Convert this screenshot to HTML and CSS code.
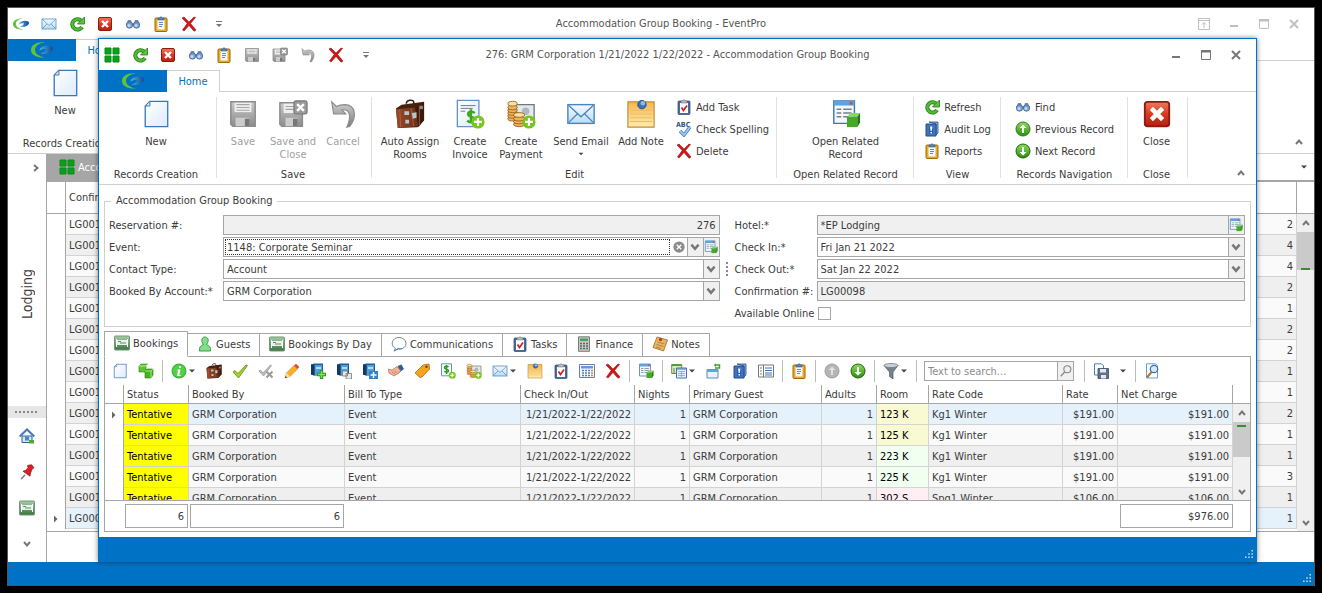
FILE: index.html
```html
<!DOCTYPE html>
<html lang="en">
<head>
    <meta charset="UTF-8">
    <meta name="viewport" content="width=device-width, initial-scale=1.0">
    <title>Accommodation Group Booking - EventPro</title>
    <link rel="stylesheet" href="styles.css">
</head>
<body>
    <svg class="defs" aria-hidden="true">
        <defs>
            <linearGradient id="gPage" x1="0" y1="0" x2="1" y2="1"><stop offset="0" stop-color="#fff"/><stop offset="1" stop-color="#dcebfb"/></linearGradient>
            <linearGradient id="gRed" x1="0" y1="0" x2="0" y2="1"><stop offset="0" stop-color="#ee7a60"/><stop offset=".5" stop-color="#d83a22"/><stop offset="1" stop-color="#b81e10"/></linearGradient>
            <linearGradient id="gGreen" x1="0" y1="0" x2="0" y2="1"><stop offset="0" stop-color="#8fdd5c"/><stop offset="1" stop-color="#2a8d12"/></linearGradient>
            <linearGradient id="gGray" x1="0" y1="0" x2="0" y2="1"><stop offset="0" stop-color="#c9c9c9"/><stop offset="1" stop-color="#8c8c8c"/></linearGradient>
            <linearGradient id="gMail" x1="0" y1="0" x2="0" y2="1"><stop offset="0" stop-color="#f4faff"/><stop offset="1" stop-color="#b8dcf8"/></linearGradient>
            <linearGradient id="gNote" x1="0" y1="0" x2="0" y2="1"><stop offset="0" stop-color="#f7b54e"/><stop offset="1" stop-color="#ffedb0"/></linearGradient>
            <linearGradient id="gBed" x1="0" y1="0" x2="0" y2="1"><stop offset="0" stop-color="#a9cbab"/><stop offset="1" stop-color="#3c7442"/></linearGradient>
            <linearGradient id="gBag" x1="0" y1="0" x2="1" y2="0"><stop offset="0" stop-color="#98492a"/><stop offset="1" stop-color="#6b3018"/></linearGradient>
            <linearGradient id="gUndo" x1="0" y1="0" x2="0" y2="1"><stop offset="0" stop-color="#cfcfcf"/><stop offset="1" stop-color="#7d7d7d"/></linearGradient>
            <linearGradient id="gLogo" x1="0" y1="0" x2="1" y2="0"><stop offset="0" stop-color="#49b6dc"/><stop offset="1" stop-color="#15479c"/></linearGradient>
        </defs>
        <symbol id="logo" viewBox="0 0 22 16">
            <path d="M14 .5C6-.5 0 3 0 8c0 5 6 8 14 7.500C8 14.500 4 11.500 4 8c0-4 4-7 10-7.500z" fill="#62c03a"/>
            <path d="M11 5c4-2.500 11-2 11 1.500 0 4-7 6.500-12.500 5 3-.8 5-2.500 5.500-4C14 6.500 11 7 8.500 8.500 8.500 7 9.500 5.700 11 5z" fill="url(#gLogo)"/>
        </symbol>
        <symbol id="grid4" viewBox="0 0 16 16"><path d="M1 1h6v6H1zM9 1h6v6H9zM1 9h6v6H1zM9 9h6v6H9z" fill="#0ca01a" stroke="#0b8a17"/></symbol>
        <symbol id="mail" viewBox="0 0 32 32">
            <rect x="2" y="6" width="28" height="20" fill="url(#gMail)" stroke="#4b84bd" stroke-width="1.500"/>
            <path d="M3 7l13 12L29 7M3 25l9-9M29 25l-9-9" fill="none" stroke="#4b84bd" stroke-width="1.300"/>
        </symbol>
        <symbol id="refresh" viewBox="0 0 16 16">
            <path d="M12 4.500A5.200 5.200 0 1 0 13 11" fill="none" stroke="#1f7f12" stroke-width="4"/>
            <path d="M12 4.500A5.200 5.200 0 1 0 13 11" fill="none" stroke="#52bb33" stroke-width="2.400"/>
            <path d="M15.500 1v7H8.500z" fill="#5cc43c" stroke="#1f7f12" stroke-width=".8"/>
        </symbol>
        <symbol id="closebox" viewBox="0 0 16 16">
            <rect x="1.500" y="1.500" width="13" height="13" rx="1.500" fill="url(#gRed)" stroke="#8e1c10"/>
            <path d="M5 5l6 6M11 5l-6 6" stroke="#fff" stroke-width="2.400"/>
        </symbol>
        <symbol id="find" viewBox="0 0 16 16">
            <path d="M3 4h3l1 3h2l1-3h3l2 5H1z" fill="#6c8cb8"/>
            <circle cx="4.500" cy="9" r="3.200" fill="#7ba0d0" stroke="#49648f" stroke-width=".8"/><circle cx="11.500" cy="9" r="3.200" fill="#7ba0d0" stroke="#49648f" stroke-width=".8"/>
            <circle cx="4" cy="9.500" r="1.500" fill="#c3d9f2"/><circle cx="11" cy="9.500" r="1.500" fill="#c3d9f2"/>
        </symbol>
        <symbol id="clipboard" viewBox="0 0 16 16">
            <rect x="2" y="2" width="12" height="13.500" rx="1" fill="#eda91c" stroke="#9c6a0c"/>
            <path d="M4.500 4h7v9.500h-7z" fill="#f2f8ff"/><path d="M6 6.500h4M6 8.500h4M6 10.500h3" stroke="#5b8fc7"/>
            <path d="M5 4V2h2l1-1.500L9 2h2v2z" fill="#5686c4" stroke="#31598f" stroke-width=".6"/>
        </symbol>
        <symbol id="delete" viewBox="0 0 16 16"><path d="M1 2l2-1 5 5 5-5 1.500.5-5 6 5.500 6.500-2 1.200L8 9.500 3 15l-1.500-1L6.200 7.500z" fill="#cf1717" stroke="#9b0c0c" stroke-width=".6"/></symbol>
        <symbol id="save" viewBox="0 0 16 16">
            <path d="M1.500 1.500h13v13h-12l-1-1z" fill="url(#gGray)" stroke="#8d8d8d" stroke-width=".8"/>
            <path d="M3.500 2h9v5h-9z" fill="#efefef"/><path d="M4.500 3h7M4.500 4.500h7M4.500 6h7" stroke="#a5a5a5" stroke-width=".6"/>
            <path d="M4 10h7.500v4.500H4z" fill="#ccc"/><path d="M9 10.500h2.500v4H9z" fill="#777"/>
        </symbol>
        <symbol id="saveclose" viewBox="0 0 16 16">
            <path d="M1 2h12v12.500H2l-1-1z" fill="url(#gGray)" stroke="#8d8d8d" stroke-width=".8"/>
            <path d="M3 2.500h7v5H3z" fill="#efefef"/><path d="M4 4h5M4 5.500h5" stroke="#a5a5a5" stroke-width=".6"/>
            <path d="M4 10h6.500v4.500H4z" fill="#ccc"/><path d="M8 10.500h2.500v4H8z" fill="#777"/>
            <rect x="8.500" y="1" width="7" height="7" rx="1" fill="#9b9b9b" stroke="#777" stroke-width=".6"/><path d="M10.200 2.700l3.600 3.600M13.800 2.700l-3.600 3.600" stroke="#fff" stroke-width="1.300"/>
        </symbol>
        <symbol id="undo" viewBox="0 0 16 16"><path d="M2 1.500L3 8h6.500L7.500 5.800c4.500-.5 5 4 2.500 9.200l1.500-.3c4-5 3.500-11.500-2.500-11.700-1.800 0-3.300.3-4.500 1z" fill="url(#gUndo)" stroke="#8b8b8b" stroke-width=".6"/></symbol>
        <symbol id="page" viewBox="0 0 32 32"><path d="M9.500 2.500h19v27h-24v-22z" fill="url(#gPage)" stroke="#3a76b8" stroke-width="1.400"/><path d="M9.500 2.500v5h-5z" fill="#d7e8fa" stroke="#3a76b8"/></symbol>
        <symbol id="bag" viewBox="0 0 32 32">
            <path d="M12 5c0-4 7-5 8-2v3" fill="none" stroke="#3a2013" stroke-width="1.600"/>
            <path d="M1 10l6-4 24-3v20l-7 7-21 1z" fill="#47200f"/><path d="M1 11l20-2 4 20-22 2z" fill="url(#gBag)"/>
            <path d="M22 9l9-6v19l-6 8z" fill="#3b1a0d"/><path d="M5 11l1 19M17 10l3 19M26 7v21" stroke="#b3703c" stroke-width=".8"/>
            <path d="M10 13h5v4h-5zM11 22h4v4h-4zM18 15l5-1v6l-4 1z" fill="#b9c5ce"/><circle cx="28" cy="9" r="2" fill="#8c8c7a"/>
        </symbol>
        <symbol id="plus" viewBox="0 0 16 16"><circle cx="8" cy="8" r="7.500" fill="#76c61f"/><path d="M8 3.500v9M3.500 8h9" stroke="#fff" stroke-width="2.500"/></symbol>
        <symbol id="invoice" viewBox="0 0 32 32">
            <path d="M2.500 1.500h23v28h-23z" fill="url(#gPage)" stroke="#6593c7" stroke-width="1.400"/><path d="M6 7h16M6 10h13M6 13h5" stroke="#69788c"/>
            <path d="M21 15c-3-3-7-1-7 1 0 4 7 2 7 6 0 3-5 4-8 1M17 11v15" fill="none" stroke="#3fa51f" stroke-width="2.600"/>
            <use href="#plus" x="17" y="17" width="15" height="15"/>
        </symbol>
        <symbol id="payment" viewBox="0 0 32 32">
            <path d="M9 6h21v16H9z" fill="#e4e9ec" stroke="#6e7880" stroke-width="1.400"/><circle cx="21" cy="13" r="4" fill="#aeb8be"/>
            <g fill="#edb45c" stroke="#8f5a14" stroke-width=".9"><ellipse cx="7" cy="21" rx="5" ry="2.500"/><ellipse cx="7" cy="18" rx="5" ry="2.500"/><ellipse cx="7" cy="15" rx="5" ry="2.500"/><ellipse cx="7" cy="12" rx="5" ry="2.500"/><ellipse cx="7" cy="9" rx="5" ry="2.500"/><ellipse cx="7" cy="5" rx="5" ry="2.500" fill="#fbe0a0"/>
            <ellipse cx="14" cy="27" rx="6" ry="2.500"/><ellipse cx="14" cy="24" rx="6" ry="2.500"/><ellipse cx="14" cy="21" rx="6" ry="2.500"/><ellipse cx="14" cy="17" rx="6" ry="2.500" fill="#fbe0a0"/></g>
            <use href="#plus" x="17" y="17" width="15" height="15"/>
        </symbol>
        <symbol id="note" viewBox="0 0 32 32">
            <path d="M2 3h28v27H2z" fill="url(#gNote)" stroke="#c48a33" stroke-width="1.200"/><path d="M4 12h24M4 16h24M4 20h24M4 24h24" stroke="#edbc62"/>
            <circle cx="17" cy="6" r="4.500" fill="#3873b6" stroke="#1f4f8d"/><circle cx="18" cy="4.500" r="2.500" fill="#8db9e6"/>
        </symbol>
        <symbol id="task" viewBox="0 0 16 16">
            <rect x="2" y="2" width="12" height="13.500" rx="1" fill="#4a6c9b" stroke="#2d4a74" stroke-width=".7"/><path d="M4 4h8v10H4z" fill="#fff"/>
            <path d="M5 4V2h1.500l1.500-1.500L9.500 2H11v2z" fill="#b7bcc4" stroke="#666" stroke-width=".5"/><path d="M5.500 8.500l2 3 3.500-5" fill="none" stroke="#d01f1f" stroke-width="1.700"/>
        </symbol>
        <symbol id="related" viewBox="0 0 32 32">
            <path d="M3 2h22v24H3z" fill="#f3f8fd" stroke="#3875b8" stroke-width="1.500"/><path d="M3 2h22v5H3z" fill="#5ba3e2"/><path d="M20 3h3v3h-3z" fill="#e04a2c"/>
            <path d="M6 11h5M6 15h5M6 19h5M13 11h9M13 15h9M13 19h6" stroke="#75808c" stroke-width="1.500"/>
            <path d="M17 19l4-4h10l-3 4z" fill="#86d767"/><path d="M17 19h11v11H17z" fill="#45a829"/><path d="M28 19l3-4v10l-3 5z" fill="#227711"/>
        </symbol>
        <symbol id="book" viewBox="0 0 16 16">
            <path d="M5 1h9v11l-2 2V3z" fill="#89acdc" stroke="#274f8d" stroke-width=".8"/><path d="M2 3h10v12H2z" fill="#3f74bf" stroke="#254d8c"/>
            <path d="M5 5h4v8H5z" fill="#2d5fa9"/><path d="M6 5.500h2.500L7.700 10H6.700zM6.500 11H8v1.500H6.500z" fill="#fff"/>
        </symbol>
        <symbol id="up" viewBox="0 0 16 16"><circle cx="8" cy="8" r="7" fill="url(#gGreen)" stroke="#2c7c18"/><path d="M8 3.500L4.500 7H7v5h2V7h2.500z" fill="#fff"/></symbol>
        <symbol id="down" viewBox="0 0 16 16"><circle cx="8" cy="8" r="7" fill="url(#gGreen)" stroke="#225f12"/><path d="M8 12.500L4.500 9H7V4h2v5h2.500z" fill="#fff"/></symbol>
        <symbol id="upgray" viewBox="0 0 16 16"><circle cx="8" cy="8" r="7" fill="#b5b5b5" stroke="#9b9b9b"/><path d="M8 3.500L4.500 7H7v5h2V7h2.500z" fill="#e2e2e2"/></symbol>
        <symbol id="boxes" viewBox="0 0 16 16">
            <path d="M1 3l2-2h7l-2 2v6H1z" fill="#59c62c" stroke="#267d12" stroke-width=".6"/><path d="M1 3h7l2-2" fill="none" stroke="#b3ef94"/>
            <path d="M7 8l2-2h6v6l-2 3H7z" fill="#46b31c" stroke="#267d12" stroke-width=".6"/><path d="M7 8h6l2-2M13 8v7" fill="none" stroke="#a5e983"/>
        </symbol>
        <symbol id="info" viewBox="0 0 16 16"><circle cx="8" cy="8" r="7.500" fill="#3bbd38"/><circle cx="8" cy="8" r="6" fill="#55cf4b"/><path d="M8 3h2v2H8zM6.500 6.500h3L8.300 12H9.500v1H6L7 7.500h-.8z" fill="#fff"/></symbol>
        <symbol id="check" viewBox="0 0 16 16"><path d="M1 9l2-1.500 3 3L14 2l1.500.5L6.500 15z" fill="#a4d32c" stroke="#5c8c12" stroke-width=".8"/></symbol>
        <symbol id="uncheck" viewBox="0 0 16 16"><path d="M1 8l1.500-1 2.500 3 7.500-8 1 .5L5.500 13z" fill="#bdbdbd" stroke="#989898" stroke-width=".8"/><path d="M8.500 8.500l6 6M14.500 8.500l-6 6" stroke="#999" stroke-width="2"/></symbol>
        <symbol id="pencil" viewBox="0 0 16 16"><path d="M1 15l1.500-5L10 2.500l3.500 3.500L6 13.500z" fill="#fbaf25" stroke="#cc7811" stroke-width=".6"/><path d="M10 2.500L12 .7 15.300 4l-1.800 2z" fill="#d5493c"/><path d="M1 15l1.500-5L6 13.500z" fill="#f8dfb6"/><path d="M1 15l.6-2 1.500 1.400z" fill="#333"/></symbol>
        <symbol id="cabinet" viewBox="0 0 16 16"><path d="M1 1.500l3-1h9v12H4l-3-1z" fill="#1f5f9a"/><path d="M4.500 2H12v10.500H4.500z" fill="#4fa0dd"/><path d="M1 1.500l3.500.5v10.500l-3.500-1z" fill="#17375c"/><path d="M6 4h5v2H6z" fill="#b6dcf6"/></symbol>
        <symbol id="roomadd" viewBox="0 0 16 16"><use href="#cabinet" width="16" height="16"/><path d="M11.500 7v9M7 11.500h9" stroke="#2e961d" stroke-width="3.400"/><path d="M11.500 8v7M8 11.500h7" stroke="#7fdf59" stroke-width="1.500"/></symbol>
        <symbol id="roomcopy" viewBox="0 0 16 16"><use href="#cabinet" width="16" height="16"/><path d="M6.500 8h5v5h-5zM10 10.500h5.500V16H10z" fill="#e8e8e8" stroke="#777" stroke-width=".8"/></symbol>
        <symbol id="roomnew" viewBox="0 0 16 16"><use href="#cabinet" width="16" height="16"/><path d="M7 8h9v8H7z" fill="#2f82cb"/><path d="M11.500 9v6M8.500 12h6" stroke="#fff" stroke-width="1.500"/></symbol>
        <symbol id="hand" viewBox="0 0 16 16"><path d="M9.500 3l4-1.500L16 6l-4 3z" fill="#2f5f9f"/><path d="M0 6l4 1 5-3.500 3.500 4-1.500 2.500L6 13l-5-3z" fill="#efb596" stroke="#a96d50" stroke-width=".7"/><path d="M4 9l3 2M6 7.500l3 2.500" stroke="#a96d50" stroke-width=".6"/></symbol>
        <symbol id="tag" viewBox="0 0 16 16"><path d="M1 10L9 2l6-1 .5 5L8 14l-2 .5z" fill="#f6a51b" stroke="#aa690d" stroke-width=".8"/><circle cx="12.500" cy="3.700" r="1.200" fill="#644010"/></symbol>
        <symbol id="charge" viewBox="0 0 16 16"><path d="M1.500.8h10v12h-10z" fill="#f4faff" stroke="#6593c7"/><path d="M8.500 4c-1.500-1.500-4-.8-4 .7 0 2 4 1 4 3 0 1.500-2.700 2-4.200.5M6.500 2v9" fill="none" stroke="#2c9a18" stroke-width="1.500"/><use href="#plus" x="8.500" y="8.500" width="7.500" height="7.500"/></symbol>
        <symbol id="calc" viewBox="0 0 16 16"><path d="M.5 1.500h15v13H.5z" fill="#f4f8fd" stroke="#6e7f96"/><path d="M2 3h12v2.500H2z" fill="#5e9ae0"/><path d="M3 7.500h2M6 7.500h2M9 7.500h2M3 10h2M6 10h2M9 10h2M3 12.500h2M6 12.500h2M9 12.500h2" stroke="#5682bb" stroke-width="1.500"/><path d="M12 7.500h2M12 10h2M12 12.500h2" stroke="#e08932" stroke-width="1.500"/></symbol>
        <symbol id="copy" viewBox="0 0 16 16"><path d="M.7 1.500h10v9h-10z" fill="#d6ecc0" stroke="#5a9938"/><path d="M.7 2.500h10M3 5v5" stroke="#5a9938"/><path d="M5.500 5h10v10h-10z" fill="#e6f1fd" stroke="#3c74b5"/><path d="M5.500 6h10" stroke="#3c74b5"/><path d="M7 8.500h7M7 10.500h7M7 12.500h7M10.500 8v6" stroke="#6e9ed4" stroke-width=".7"/></symbol>
        <symbol id="restore" viewBox="0 0 16 16"><path d="M1 6.500h11v8.500H1z" fill="#e8f3fe" stroke="#5a8cc2"/><path d="M1 6.500h11V9H1z" fill="#62a3e0"/><path d="M9 5h4.500V2H10" fill="none" stroke="#4b9c36" stroke-width="1.500"/><path d="M10 .5v3.500L7.500 2z" fill="#4b9c36"/></symbol>
        <symbol id="pane" viewBox="0 0 16 16"><path d="M.5 2h15v12H.5z" fill="#fff" stroke="#777"/><path d="M5.500 2v12M2 5h2M2 8h2M2 11h2" stroke="#777"/><path d="M7 5h7M7 7.500h7M7 10h7M7 12h7" stroke="#3679bf"/></symbol>
        <symbol id="funnel" viewBox="0 0 16 16"><path d="M1 2.500L6.500 9v4.500L10 16V9l5-6.500z" fill="#77828f" stroke="#505963" stroke-width=".7"/><ellipse cx="8" cy="2.500" rx="7" ry="2" fill="#ccd3da" stroke="#66707b" stroke-width=".7"/></symbol>
        <symbol id="lens" viewBox="0 0 16 16"><circle cx="9.500" cy="6" r="4" fill="none" stroke="#888" stroke-width="1.300"/><path d="M6.500 9L2 14" stroke="#888" stroke-width="1.600"/></symbol>
        <symbol id="export" viewBox="0 0 16 16"><path d="M1.500.8h7l2 2V12h-9z" fill="#fff" stroke="#4c7fba"/><path d="M5 5.500h10.500v10H5z" fill="#63718a" stroke="#3c4b64" stroke-width=".8"/><path d="M7 6h6v3.500H7zM8 12h5v3.500H8z" fill="#e4e9f0"/></symbol>
        <symbol id="preview" viewBox="0 0 16 16"><path d="M2.500.8h9l2 2V15h-11z" fill="#fff" stroke="#69a1d6"/><circle cx="10" cy="6" r="3.700" fill="#d4eafc" stroke="#3b6ea8" stroke-width="1.200"/><path d="M7.500 9L3 14.500" stroke="#b3752b" stroke-width="2"/></symbol>
        <symbol id="bed" viewBox="0 0 16 16"><rect x=".5" y="1" width="15" height="14" rx="1" fill="url(#gBed)" stroke="#6d9a70"/><path d="M2.500 4v8M13.500 4v8" stroke="#fff"/><path d="M3 5h10v5H3z" fill="#e9f3e9"/><path d="M4 6.500h3M6 8h6" stroke="#5d8d61"/></symbol>
        <symbol id="guest" viewBox="0 0 16 16"><path d="M2.500 15c-.5-4 1-5 4-6.500C3 4 5.500 1 8 1s5 3 1.500 7.500c3 1.500 4.500 2.500 4 6.500z" fill="#85dc8a" stroke="#3ba043"/></symbol>
        <symbol id="bubble" viewBox="0 0 16 16"><path d="M4.500 12.500C-1 10 .5 1.500 8 1.500s9.500 8.500 3.500 11c-1.500.5-3 .5-4.500.3L3 15z" fill="#fff" stroke="#7a8794"/><path d="M11.500 12.500c-1.500.5-3 .5-4.500.3L3 15" fill="none" stroke="#3d86c6"/></symbol>
        <symbol id="finance" viewBox="0 0 16 16"><path d="M2.500.8h11v14.500h-11z" fill="#c3c8c3" stroke="#787d78"/><path d="M4 2.500h8V5H4z" fill="#45a254"/><path d="M4 7.500h2M7 7.500h2M10 7.500h2M4 10h2M7 10h2M10 10h2M4 12.500h2M7 12.500h2M10 12.500h2" stroke="#626862" stroke-width="1.400"/></symbol>
        <symbol id="notes" viewBox="0 0 16 16"><path d="M5 1l10.500 3-4 11L1 11.500z" fill="#e5b766" stroke="#98691e" stroke-width=".8"/><path d="M5.500 6l7 2M4.500 8.500l7 2M4 11l5 1.500" stroke="#a77529" stroke-width=".8"/><circle cx="8.500" cy="3.500" r="1.600" fill="#ce2626"/></symbol>
        <symbol id="home" viewBox="0 0 16 16"><path d="M3 8h10v6.500H3z" fill="#d3e5fa" stroke="#315f9e"/><path d="M.7 8.500L8 1.500l7.300 7" fill="none" stroke="#4479bb" stroke-width="2"/><path d="M6 8.500h4v4H6z" fill="#4f84c6"/><path d="M10 12h5v3.500h-5z" fill="#49ac31"/></symbol>
        <symbol id="pin" viewBox="0 0 16 16"><path d="M6 11l-4 4" stroke="#777" stroke-width="1.400"/><path d="M8.500 1.500l4-.8 2.500 3-2 1.500-1.500 4-.5 3-7-5 3-1 2-2.500z" fill="#dc1f26" stroke="#960d14" stroke-width=".7"/></symbol>
        <symbol id="clear" viewBox="0 0 16 16"><circle cx="8" cy="8" r="7.500" fill="#8b8b8b"/><path d="M5 5l6 6M11 5l-6 6" stroke="#fff" stroke-width="1.800"/></symbol>
        <symbol id="chev" viewBox="0 0 10 10"><path d="M2 3l3 3.500L8 3" fill="none" stroke="#777" stroke-width="2"/></symbol>
        <symbol id="caret" viewBox="0 0 10 10"><path d="M2 3.500h6L5 6.500z" fill="#444"/></symbol>
        <symbol id="more" viewBox="0 0 10 10"><path d="M2 2.500h6" stroke="#777"/><path d="M2 5h6L5 8z" fill="#777"/></symbol>
        <symbol id="max" viewBox="0 0 10 10"><path d="M.5.500h9v9H.5z" fill="none" stroke="currentColor"/><path d="M0 1.500h10" stroke="currentColor" stroke-width="2"/></symbol>
        <symbol id="min" viewBox="0 0 10 10"><path d="M1 7h8" stroke="currentColor" stroke-width="2"/></symbol>
        <symbol id="exit" viewBox="0 0 10 10"><path d="M1 1l8 8M9 1L1 9" stroke="currentColor" stroke-width="2"/></symbol>
        <symbol id="pop" viewBox="0 0 12 12"><path d="M.5.500h11v11H.5zM0 2.500h12M6 10V4.500M4 6.500L6 4.500l2 2" fill="none" stroke="currentColor"/></symbol>
        <symbol id="grip" viewBox="0 0 10 10"><path d="M8 0h2v2H8zM8 4h2v2H8zM8 8h2v2H8zM4 4h2v2H4zM4 8h2v2H4zM0 8h2v2H0z" fill="#b9d8ef"/></symbol>
    </svg>

    <!-- main window, behind -->
    <div class="window main-window">
        <div class="titlebar inactive">
            <div class="quick">
                <button aria-label="EventPro"><svg><use href="#logo"/></svg></button>
                <button aria-label="Email"><svg><use href="#mail"/></svg></button>
                <button aria-label="Refresh"><svg><use href="#refresh"/></svg></button>
                <button aria-label="Close"><svg><use href="#closebox"/></svg></button>
                <button aria-label="Find"><svg><use href="#find"/></svg></button>
                <button aria-label="Reports"><svg><use href="#clipboard"/></svg></button>
                <button aria-label="Delete"><svg><use href="#delete"/></svg></button>
                <button class="more" aria-label="More"><svg class="tiny"><use href="#more"/></svg></button>
            </div>
            <div class="title">Accommodation Group Booking - EventPro</div>
            <div class="controls">
                <button aria-label="Pop out"><svg class="pop"><use href="#pop"/></svg></button>
                <button aria-label="Minimize"><svg><use href="#min"/></svg></button>
                <button aria-label="Maximize"><svg><use href="#max"/></svg></button>
                <button aria-label="Exit"><svg><use href="#exit"/></svg></button>
            </div>
        </div>
        <div class="ribbon-tabs">
            <button class="app-button" aria-label="Application menu"><svg><use href="#logo"/></svg></button>
            <button class="ribbon-tab">Home</button>
        </div>
        <div class="ribbon">
            <div class="group group-records">
                <div class="group-items"><button class="big"><svg><use href="#page"/></svg>New</button></div>
                <div class="group-name">Records Creation</div>
            </div>
            <button class="collapse" aria-label="Collapse ribbon"><svg class="tiny flip"><use href="#chev"/></svg></button>
        </div>
        <div class="workspace">
            <div class="navbar">
                <button class="nav-expand" aria-label="Expand"><svg class="tiny right"><use href="#chev"/></svg></button>
                <div class="nav-title"><span>Lodging</span></div>
                <div class="nav-splitter"></div>
                <button class="nav-item" aria-label="Home page"><svg><use href="#home"/></svg></button>
                <button class="nav-item" aria-label="Pinned"><svg><use href="#pin"/></svg></button>
                <button class="nav-item" aria-label="Lodging"><svg><use href="#bed"/></svg></button>
                <button class="nav-item" aria-label="More items"><svg class="tiny"><use href="#chev"/></svg></button>
            </div>
            <div class="documents">
                <div class="doc-tabs">
                    <button class="doc-tab"><svg><use href="#grid4"/></svg>Accommodation</button>
                    <button class="doc-menu" aria-label="Documents"><svg class="tiny"><use href="#caret"/></svg></button>
                </div>
                <div class="list">
                    <table class="list-table">
                        <colgroup><col class="c-mark"><col><col class="c-count"></colgroup>
                        <thead><tr><th></th><th>Confirmation</th><th></th></tr></thead>
                        <tbody id="listRows"></tbody>
                    </table>
                    <div class="scrollbar">
                        <div class="scroll-head"></div>
                        <svg class="tiny flip"><use href="#chev"/></svg>
                        <div class="thumb"><i></i></div>
                        <svg class="tiny last"><use href="#chev"/></svg>
                    </div>
                </div>
            </div>
        </div>
        <div class="statusbar"><svg><use href="#grip"/></svg></div>
    </div>

    <!-- booking window -->
    <div class="window booking-window">
        <div class="titlebar">
            <div class="quick">
                <button aria-label="EventPro"><svg><use href="#grid4"/></svg></button>
                <button aria-label="Refresh"><svg><use href="#refresh"/></svg></button>
                <button aria-label="Close"><svg><use href="#closebox"/></svg></button>
                <button aria-label="Find"><svg><use href="#find"/></svg></button>
                <button aria-label="Reports"><svg><use href="#clipboard"/></svg></button>
                <button aria-label="Save"><svg><use href="#save"/></svg></button>
                <button aria-label="Save and Close"><svg><use href="#saveclose"/></svg></button>
                <button aria-label="Cancel"><svg><use href="#undo"/></svg></button>
                <button aria-label="Delete"><svg><use href="#delete"/></svg></button>
                <button class="more" aria-label="More"><svg class="tiny"><use href="#more"/></svg></button>
            </div>
            <div class="title">276: GRM Corporation 1/21/2022 1/22/2022 - Accommodation Group Booking</div>
            <div class="controls">
                <button aria-label="Minimize"><svg><use href="#min"/></svg></button>
                <button aria-label="Maximize"><svg><use href="#max"/></svg></button>
                <button aria-label="Exit"><svg><use href="#exit"/></svg></button>
            </div>
        </div>
        <div class="ribbon-tabs">
            <button class="app-button" aria-label="Application menu"><svg><use href="#logo"/></svg></button>
            <button class="ribbon-tab">Home</button>
        </div>
        <div class="ribbon">
            <div class="group group-records">
                <div class="group-items"><button class="big"><svg><use href="#page"/></svg>New</button></div>
                <div class="group-name">Records Creation</div>
            </div>
            <div class="group group-save">
                <div class="group-items">
                    <button class="big" disabled><svg><use href="#save"/></svg>Save</button>
                    <button class="big" disabled><svg><use href="#saveclose"/></svg>Save and<br>Close</button>
                    <button class="big" disabled><svg><use href="#undo"/></svg>Cancel</button>
                </div>
                <div class="group-name">Save</div>
            </div>
            <div class="group group-edit">
                <div class="group-items">
                    <button class="big wide"><svg><use href="#bag"/></svg>Auto Assign<br>Rooms</button>
                    <button class="big"><svg><use href="#invoice"/></svg>Create<br>Invoice</button>
                    <button class="big"><svg><use href="#payment"/></svg>Create<br>Payment</button>
                    <button class="big wide"><svg><use href="#mail"/></svg>Send Email<svg class="tiny"><use href="#caret"/></svg></button>
                    <button class="big"><svg><use href="#note"/></svg>Add Note</button>
                    <div class="small-col">
                        <button><svg><use href="#task"/></svg>Add Task</button>
                        <button>
                            <svg viewBox="0 0 16 16">
                                <text x="0" y="6" class="abc">ABC</text>
                                <path d="M4 10l4 4 6-8" fill="none" stroke="#4981bd" stroke-width="3.400"/><path d="M4 10l4 4 6-8" fill="none" stroke="#a2caf0" stroke-width="1.800"/>
                            </svg>Check Spelling
                        </button>
                        <button><svg><use href="#delete"/></svg>Delete</button>
                    </div>
                </div>
                <div class="group-name">Edit</div>
            </div>
            <div class="group group-related">
                <div class="group-items"><button class="big wide"><svg><use href="#related"/></svg>Open Related<br>Record</button></div>
                <div class="group-name">Open Related Record</div>
            </div>
            <div class="group group-view">
                <div class="group-items">
                    <div class="small-col">
                        <button><svg><use href="#refresh"/></svg>Refresh</button>
                        <button><svg><use href="#book"/></svg>Audit Log</button>
                        <button><svg><use href="#clipboard"/></svg>Reports</button>
                    </div>
                </div>
                <div class="group-name">View</div>
            </div>
            <div class="group group-nav">
                <div class="group-items">
                    <div class="small-col">
                        <button><svg><use href="#find"/></svg>Find</button>
                        <button><svg><use href="#up"/></svg>Previous Record</button>
                        <button><svg><use href="#down"/></svg>Next Record</button>
                    </div>
                </div>
                <div class="group-name">Records Navigation</div>
            </div>
            <div class="group group-close">
                <div class="group-items"><button class="big"><svg><use href="#closebox"/></svg>Close</button></div>
                <div class="group-name">Close</div>
            </div>
            <button class="collapse" aria-label="Collapse ribbon"><svg class="tiny flip"><use href="#chev"/></svg></button>
        </div>

        <div class="content">
            <fieldset class="details">
                <legend>Accommodation Group Booking</legend>
                <div class="fields">
                    <label for="reservation">Reservation #:</label>
                    <div class="field readonly"><input id="reservation" class="num" value="276" readonly></div>
                    <label for="event">Event:</label>
                    <div class="field focused">
                        <select id="event"><option>1148: Corporate Seminar</option></select>
                        <button class="clear" aria-label="Clear"><svg><use href="#clear"/></svg></button>
                        <button aria-label="Drop down"><svg><use href="#chev"/></svg></button>
                        <button aria-label="Open event"><svg class="icon"><use href="#related"/></svg></button>
                    </div>
                    <label for="contact">Contact Type:</label>
                    <div class="field"><select id="contact"><option>Account</option></select><button aria-label="Drop down"><svg><use href="#chev"/></svg></button></div>
                    <label for="account">Booked By Account:*</label>
                    <div class="field"><select id="account"><option>GRM Corporation</option></select><button aria-label="Drop down"><svg><use href="#chev"/></svg></button></div>
                </div>
                <div class="splitter"></div>
                <div class="fields second">
                    <label for="hotel">Hotel:*</label>
                    <div class="field readonly"><input id="hotel" value="*EP Lodging" readonly><button aria-label="Open hotel"><svg class="icon"><use href="#related"/></svg></button></div>
                    <label for="checkin">Check In:*</label>
                    <div class="field"><select id="checkin"><option>Fri Jan 21 2022</option></select><button aria-label="Drop down"><svg><use href="#chev"/></svg></button></div>
                    <label for="checkout">Check Out:*</label>
                    <div class="field"><select id="checkout"><option>Sat Jan 22 2022</option></select><button aria-label="Drop down"><svg><use href="#chev"/></svg></button></div>
                    <label for="confirmation">Confirmation #:</label>
                    <div class="field readonly"><input id="confirmation" value="LG00098" readonly></div>
                    <label for="online">Available Online</label>
                    <input id="online" type="checkbox">
                </div>
            </fieldset>

            <div class="tabs">
                <button class="tab active"><svg><use href="#bed"/></svg>Bookings</button>
                <button class="tab"><svg><use href="#guest"/></svg>Guests</button>
                <button class="tab"><svg><use href="#bed"/></svg>Bookings By Day</button>
                <button class="tab"><svg><use href="#bubble"/></svg>Communications</button>
                <button class="tab"><svg><use href="#task"/></svg>Tasks</button>
                <button class="tab"><svg><use href="#finance"/></svg>Finance</button>
                <button class="tab"><svg><use href="#notes"/></svg>Notes</button>
            </div>

            <div class="panel">
                <div class="toolbar">
                    <button aria-label="New"><svg><use href="#page"/></svg></button>
                    <button aria-label="Add several"><svg><use href="#boxes"/></svg></button>
                    <span class="sep"></span>
                    <button class="drop" aria-label="Status"><svg><use href="#info"/></svg><svg class="tiny"><use href="#caret"/></svg></button>
                    <button aria-label="Auto assign rooms"><svg><use href="#bag"/></svg></button>
                    <button aria-label="Check in"><svg><use href="#check"/></svg></button>
                    <button aria-label="Undo check in" disabled><svg><use href="#uncheck"/></svg></button>
                    <button aria-label="Edit"><svg><use href="#pencil"/></svg></button>
                    <button aria-label="Add room"><svg><use href="#roomadd"/></svg></button>
                    <button aria-label="Copy room"><svg><use href="#roomcopy"/></svg></button>
                    <button aria-label="New room"><svg><use href="#roomnew"/></svg></button>
                    <button aria-label="Assign"><svg><use href="#hand"/></svg></button>
                    <button aria-label="Rate"><svg><use href="#tag"/></svg></button>
                    <button aria-label="Create invoice"><svg><use href="#charge"/></svg></button>
                    <button aria-label="Create payment"><svg><use href="#payment"/></svg></button>
                    <button class="drop" aria-label="Send email"><svg><use href="#mail"/></svg><svg class="tiny"><use href="#caret"/></svg></button>
                    <button aria-label="Add note"><svg><use href="#note"/></svg></button>
                    <button aria-label="Add task"><svg><use href="#task"/></svg></button>
                    <button aria-label="Calendar"><svg><use href="#calc"/></svg></button>
                    <button aria-label="Delete"><svg><use href="#delete"/></svg></button>
                    <span class="sep"></span>
                    <button aria-label="Open related record"><svg><use href="#related"/></svg></button>
                    <span class="sep"></span>
                    <button class="drop" aria-label="Copy"><svg><use href="#copy"/></svg><svg class="tiny"><use href="#caret"/></svg></button>
                    <button aria-label="Reset view"><svg><use href="#restore"/></svg></button>
                    <button aria-label="Audit log"><svg><use href="#book"/></svg></button>
                    <button aria-label="Layout"><svg><use href="#pane"/></svg></button>
                    <span class="sep"></span>
                    <button aria-label="Reports"><svg><use href="#clipboard"/></svg></button>
                    <span class="sep"></span>
                    <button aria-label="Previous record" disabled><svg><use href="#upgray"/></svg></button>
                    <button aria-label="Next record"><svg><use href="#down"/></svg></button>
                    <span class="sep"></span>
                    <button class="drop" aria-label="Filter"><svg><use href="#funnel"/></svg><svg class="tiny"><use href="#caret"/></svg></button>
                    <span class="sep"></span>
                    <div class="field search">
                        <input type="text" placeholder="Text to search..." aria-label="Text to search">
                        <button aria-label="Search"><svg class="icon"><use href="#lens"/></svg></button>
                    </div>
                    <span class="sep"></span>
                    <button class="drop far" aria-label="Export"><svg><use href="#export"/></svg><svg class="tiny"><use href="#caret"/></svg></button>
                    <span class="sep"></span>
                    <button aria-label="Print preview"><svg><use href="#preview"/></svg></button>
                </div>
                <div class="grid-area">
                    <table class="bookings">
                        <thead>
                            <tr>
                                <th class="c-mark"></th><th class="c-status">Status</th><th class="c-booked">Booked By</th>
                                <th class="c-bill">Bill To Type</th><th class="c-dates">Check In/Out</th><th class="c-small">Nights</th>
                                <th>Primary Guest</th><th class="c-small">Adults</th><th class="c-room">Room</th>
                                <th class="c-code">Rate Code</th><th class="c-small">Rate</th><th class="c-net">Net Charge</th>
                            </tr>
                        </thead>
                        <tbody id="bookingRows"></tbody>
                    </table>
                    <div class="scrollbar">
                        <div class="scroll-head"></div>
                        <svg class="tiny flip"><use href="#chev"/></svg>
                        <div class="thumb"><i></i></div>
                        <svg class="tiny last"><use href="#chev"/></svg>
                    </div>
                </div>
                <div class="totals">
                    <output class="total-status">6</output>
                    <output class="total-booked">6</output>
                    <output class="total-net">$976.00</output>
                </div>
            </div>
        </div>
        <div class="statusbar"><svg><use href="#grip"/></svg></div>
    </div>

    <script>
        const marker = '<svg class="tiny"><path d="M3 1.500v7L6.500 5z" fill="#666"/></svg>';

        const counts = [2, 4, 4, 2, 1, 2, 2, 1, 1, 2, 1, 1, 3, 1, 1];

        const bookings = [
            ['123 K', 'yellow', 'Kg1 Winter', '$191.00'],
            ['125 K', 'yellow', 'Kg1 Winter', '$191.00'],
            ['223 K', 'green', 'Kg1 Winter', '$191.00'],
            ['225 K', 'green', 'Kg1 Winter', '$191.00'],
            ['302 S', 'pink', 'Spg1 Winter', '$106.00']
        ];

        function renderList() {
            let html = '';
            counts.forEach((count, i) => {
                const last = i === counts.length - 1;
                html += `<tr class="${last ? 'selected' : ''}"><td class="mark">${last ? marker : ''}</td>
                    <td>${last ? 'LG000' : 'LG001'}</td><td class="num">${count}</td></tr>`;
            });
            document.getElementById('listRows').innerHTML = html;
        }

        function renderBookings() {
            let html = '';
            bookings.forEach(([room, color, code, rate], i) => {
                html += `<tr class="${i === 0 ? 'selected' : ''}"><td class="mark">${i === 0 ? marker : ''}</td>
                    <td class="status">Tentative</td><td>GRM Corporation</td><td>Event</td>
                    <td class="num">1/21/2022-1/22/2022</td><td class="num">1</td><td>GRM Corporation</td>
                    <td class="num">1</td><td class="room ${color}">${room}</td><td>${code}</td>
                    <td class="num">${rate}</td><td class="num">${rate}</td></tr>`;
            });
            document.getElementById('bookingRows').innerHTML = html;
        }

        renderList();
        renderBookings();
    </script>
</body>
</html>
```
FILE: styles.css
```css
* {
    box-sizing: border-box;
}
body, html {
    margin: 0;
    padding: 0;
    width: 100%;
    height: 100%;
    overflow: hidden;
    background-color: #000;
    color: #3b3b3b;
    font-family: "DejaVu Sans Condensed", Tahoma, sans-serif;
    font-size: 11px;
    line-height: 13px;
}
button, input, select {
    font: inherit;
    color: inherit;
    border: none;
    border-radius: 0;
    margin: 0;
    padding: 0;
    background: none;
}
button {
    display: flex;
    align-items: center;
    justify-content: center;
    flex: none;
}
svg {
    width: 16px;
    height: 16px;
    flex: none;
    display: block;
}
.defs {
    position: absolute;
    width: 0;
    height: 0;
}
.abc {
    font-size: 7px;
    font-weight: bold;
    fill: #33557f;
}
svg.tiny {
    width: 10px;
    height: 10px;
}
.flip {
    transform: rotate(180deg);
}
.right {
    transform: rotate(-90deg);
}

/* windows */
.window {
    position: absolute;
    display: flex;
    flex-direction: column;
    background-color: #fff;
    overflow: hidden;
}
.main-window {
    top: 7px;
    left: 7px;
    right: 7px;
    bottom: 7px;
    border: 1px solid #555;
}
.booking-window {
    top: 38px;
    left: 98px;
    right: 65px;
    bottom: 31px;
    border: 1px solid #0072c6;
    box-shadow: 0 0 5px rgba(0, 0, 0, 0.5);
}
.titlebar {
    flex: none;
    display: grid;
    grid-template-columns: 1fr auto 1fr;
    align-items: center;
    height: 31px;
    color: #555;
}
.quick {
    display: flex;
    margin-left: -1px;
}
.quick button {
    width: 28px;
    height: 30px;
}
.quick .more {
    margin-left: 2px;
}
.controls {
    display: flex;
    justify-content: flex-end;
    padding-right: 5px;
    color: #777;
}
.inactive .controls {
    color: #c0c0c0;
}
.controls button {
    width: 30px;
    height: 28px;
}
.controls svg {
    width: 10px;
    height: 10px;
}
.controls .pop {
    width: 12px;
    height: 12px;
}
.statusbar {
    flex: none;
    height: 24px;
    background-color: #0072c6;
    display: flex;
    justify-content: flex-end;
    align-items: flex-end;
    padding: 3px;
}
.main-window .statusbar {
    height: 23px;
}
.statusbar svg {
    width: 8px;
    height: 8px;
}

/* ribbon */
.ribbon-tabs {
    flex: none;
    display: flex;
    height: 22px;
    border-bottom: 1px solid #d0d0d0;
}
.app-button {
    width: 68px;
    height: 22px;
    background-color: #0072c6;
}
.app-button svg {
    width: 24px;
}
.ribbon-tab {
    width: 53px;
    height: 22px;
    background-color: #fff;
    color: #0072c6;
    border-top: 1px solid #d0d0d0;
    border-right: 1px solid #d0d0d0;
}
.ribbon {
    flex: none;
    display: flex;
    height: 93px;
    padding: 4px 0 1px;
    border-bottom: 1px solid #d0d0d0;
}
.group {
    display: flex;
    flex-direction: column;
    align-items: center;
    background: linear-gradient(#e1e1e1, #e1e1e1) right 1px / 1px 81px no-repeat;
}
.group-items {
    flex: 1;
    display: flex;
    min-height: 0;
}
.group-name {
    height: 15px;
}
.group-records {
    width: 118px;
    padding-right: 4px;
}
.group-save {
    width: 155px;
}
.group-edit {
    width: 405px;
}
.group-edit .group-items {
    align-self: flex-start;
    gap: 1px;
    padding-left: 4px;
}
.group-related {
    width: 137px;
}
.group-view {
    width: 87px;
}
.group-nav {
    width: 127px;
}
.group-close {
    width: 60px;
}
.group-save, .group-close {
    padding-right: 3px;
}
.big {
    display: flex;
    flex-direction: column;
    justify-content: flex-start;
    width: 50px;
    white-space: nowrap;
}
.big.wide {
    width: 68px;
}
.big svg {
    width: 30px;
    height: 30px;
    margin: 3px 0 6px;
}
.big svg.tiny {
    width: 8px;
    height: 8px;
    margin: 2px 0 0;
}
.big:disabled {
    color: #a0a0a0;
}
.small-col {
    display: flex;
    flex-direction: column;
}
.group-edit .small-col {
    padding-left: 9px;
}
.small-col button {
    height: 22px;
    gap: 4px;
    justify-content: flex-start;
    white-space: nowrap;
}
.collapse {
    margin-left: auto;
    align-self: flex-end;
    width: 30px;
    height: 20px;
}

/* main window body */
.workspace {
    flex: 1;
    display: flex;
    min-height: 0;
}
.navbar {
    width: 38px;
    display: flex;
    flex-direction: column;
    align-items: center;
}
.nav-expand {
    height: 28px;
    align-self: flex-end;
    padding-right: 5px;
}
.nav-title {
    flex: 1;
    display: flex;
    align-items: center;
    font-size: 14px;
    line-height: 18px;
}
.nav-title span {
    writing-mode: vertical-rl;
    transform: rotate(180deg);
}
.nav-splitter {
    width: 100%;
    height: 12px;
    background: repeating-linear-gradient(90deg, #888 0 2px, #e6e6e6 2px 4px) center / 24px 2px no-repeat #e6e6e6;
}
.nav-item {
    width: 36px;
    height: 36px;
}
.documents {
    flex: 1;
    display: flex;
    flex-direction: column;
    border-left: 1px solid #a6a6a6;
    padding-bottom: 30px;
}
.doc-tabs {
    flex: none;
    display: flex;
    justify-content: space-between;
    height: 28px;
    border-bottom: 2px solid #a6a6a6;
}
.doc-tab {
    gap: 3px;
    padding: 0 12px;
    background-color: #a6a6a6;
    color: #fff;
}
.doc-menu {
    width: 20px;
}
.list, .grid-area {
    flex: 1;
    display: flex;
    align-items: flex-start;
    min-height: 0;
    overflow: hidden;
    border-bottom: 1px solid #a6a6a6;
}
.scrollbar {
    flex: none;
    align-self: stretch;
    width: 17px;
    display: flex;
    flex-direction: column;
    align-items: center;
    background-color: #f0f0f0;
}
.scroll-head {
    width: 100%;
    height: 19px;
    margin-bottom: 4px;
    background-color: #fff;
    border-bottom: 1px solid #a6a6a6;
}
.list .scroll-head {
    height: 32px;
}
.thumb {
    width: 100%;
    height: 35px;
    margin-top: 4px;
    padding: 3px 4px;
    background-color: #cacaca;
}
.thumb i {
    display: block;
    height: 2px;
    background-color: #3f8a2e;
}
.list .thumb {
    display: flex;
    align-items: flex-end;
    padding-bottom: 0;
    height: 38px;
}
.list .thumb i {
    width: 100%;
}
.scrollbar .last {
    margin-top: auto;
    margin-bottom: 3px;
}

/* tables */
table {
    flex: 1;
    width: 0;
    table-layout: fixed;
    border-collapse: separate;
    border-spacing: 0;
}
th, td {
    height: 21px;
    padding: 0 3px;
    text-align: left;
    font-weight: normal;
    white-space: nowrap;
    overflow: hidden;
}
th {
    height: 19px;
    border-right: 1px solid #a6a6a6;
    border-bottom: 1px solid #a6a6a6;
}
td {
    border-right: 1px solid #d3d3d3;
    border-bottom: 1px solid #d3d3d3;
}
tr:nth-child(odd) td {
    background-color: #fafafa;
}
tr:nth-child(even) td {
    background-color: #efefef;
}
.bookings tr:nth-child(even) td {
    background-color: #fafafa;
}
.bookings tr:nth-child(odd) td {
    background-color: #efefef;
}
tr.selected td {
    background-color: #e5f1fb !important;
}
tr td.mark {
    padding: 0 4px;
    background-color: #fff !important;
    border-right-color: #a6a6a6;
    border-bottom: none;
}
.list-table th {
    height: 32px;
}
.num {
    text-align: right;
}
tr td.status {
    background-color: #ff0 !important;
    color: #000;
}
tr td.room {
    color: #000;
}
tr td.yellow {
    background-color: #f9f9d2 !important;
}
tr td.green {
    background-color: #f0fff0 !important;
}
tr td.pink {
    background-color: #ffeff4 !important;
}
.c-mark {
    width: 19px;
}
.c-count {
    width: 60px;
}
.c-status {
    width: 65px;
}
.c-booked {
    width: 156px;
}
.c-bill {
    width: 176px;
}
.c-dates {
    width: 114px;
}
.c-small {
    width: 55px;
}
.c-room {
    width: 52px;
}
.c-code {
    width: 134px;
}
.c-net {
    width: 115px;
}

/* booking form */
.content {
    flex: 1;
    display: flex;
    flex-direction: column;
    min-height: 0;
    padding: 9px 5px 5px;
}
.details {
    display: grid;
    grid-template-columns: 61fr 15px 51fr;
    margin: 0;
    padding: 7px 5px 3px 4px;
    border: 1px solid #d0d0d0;
}
.details legend {
    margin-left: 2px;
    padding: 0 5px;
    line-height: 14px;
}
.fields {
    display: grid;
    grid-template-columns: 114px 1fr;
    align-items: center;
    align-content: start;
    grid-auto-rows: 20px;
    gap: 2px 0;
    min-width: 0;
    white-space: nowrap;
}
.fields.second {
    grid-template-columns: 82px 1fr;
}
.field {
    display: flex;
    height: 20px;
    min-width: 0;
    background-color: #fff;
    border: 1px solid #a6a6a6;
}
.field input, .field select {
    flex: 1;
    min-width: 0;
    padding: 0 3px;
    appearance: none;
    outline: none;
}
.field button {
    width: 16px;
    background-color: #f0f0f0;
    border-left: 1px solid #a6a6a6;
}
.field button svg {
    width: 12px;
    height: 12px;
}
.field button .icon {
    width: 14px;
    height: 14px;
}
.field .clear {
    background: none;
    border: none;
}
.readonly {
    background-color: #f0f0f0;
}
.focused select {
    margin: 1px;
    padding: 0 1px;
    border: 1px dotted #333;
}
.fields input[type="checkbox"] {
    appearance: none;
    width: 13px;
    height: 13px;
    margin-left: 1px;
    border: 1px solid #a6a6a6;
    background-color: #fff;
}
.splitter {
    width: 2px;
    height: 14px;
    margin-top: 47px;
    justify-self: center;
    background: repeating-linear-gradient(#888 0 2px, #fff 2px 4px);
}

/* detail tabs */
.tabs {
    flex: none;
    display: flex;
    align-items: flex-end;
    height: 26px;
    margin: 4px 0 -1px;
    z-index: 1;
}
.tab {
    height: 24px;
    padding: 0 9px 2px;
    gap: 3px;
    background-color: #fff;
    border: 1px solid #a6a6a6;
    border-left-width: 0;
}
.tab.active {
    height: 26px;
    border-left-width: 1px;
    border-bottom-color: #fff;
}
.panel {
    flex: 1;
    display: flex;
    flex-direction: column;
    min-height: 0;
    border: 1px solid #a6a6a6;
}
.toolbar {
    flex: none;
    display: flex;
    align-items: center;
    height: 28px;
    padding-left: 2px;
}
.toolbar > button {
    width: 26px;
    height: 26px;
}
.toolbar .drop {
    width: 35px;
    padding-left: 5px;
    justify-content: flex-start;
}
.toolbar .drop.far {
    width: 44px;
    gap: 9px;
}
.sep {
    width: 1px;
    height: 22px;
    margin: 0 3px;
    background-color: #bbb;
}
.search {
    width: 150px;
    margin: 0 7px 0 4px;
}
.search input::placeholder {
    color: #8c8c8c;
}
.totals {
    flex: none;
    display: flex;
    gap: 2px;
    height: 30px;
    padding: 3px 17px 3px 20px;
}
.totals output {
    border: 1px solid #a6a6a6;
    padding: 5px 3px;
    text-align: right;
}
.total-status {
    width: 63px;
}
.total-booked {
    width: 154px;
}
.total-net {
    width: 113px;
    margin-left: auto;
}
```
